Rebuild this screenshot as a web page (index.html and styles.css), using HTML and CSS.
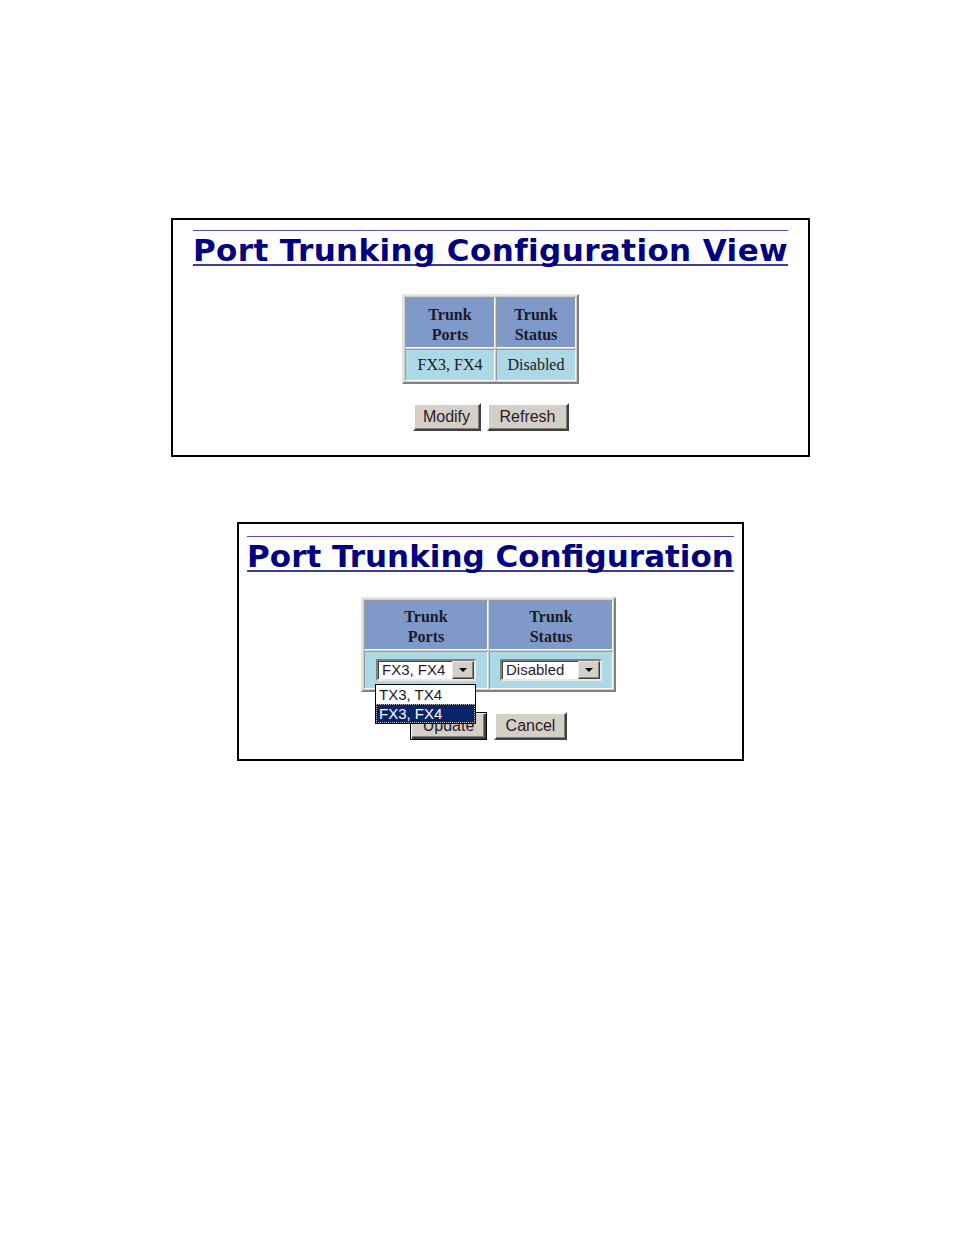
FILE: index.html
```html
<!DOCTYPE html>
<html>
<head>
<meta charset="utf-8">
<link rel="stylesheet" href="styles.css">
</head>
<body>
<div class="page">
  <div class="panel panel-view">
    <div class="title"><span class="title-text">Port Trunking Configuration View</span></div>
    <table class="grid grid-view">
      <tr><th>Trunk<br>Ports</th><th>Trunk<br>Status</th></tr>
      <tr><td>FX3, FX4</td><td>Disabled</td></tr>
    </table>
    <div class="buttons buttons-view">
      <button class="btn btn-modify">Modify</button>
      <button class="btn btn-refresh">Refresh</button>
    </div>
  </div>

  <div class="panel panel-edit">
    <div class="title"><span class="title-text">Port Trunking Configuration</span></div>
    <table class="grid grid-edit">
      <tr><th>Trunk<br>Ports</th><th>Trunk<br>Status</th></tr>
      <tr>
        <td>
          <div class="select-wrap">
            <div class="select select-ports"><span class="select-value">FX3, FX4</span><span class="select-arrow"></span></div>
            <div class="dropdown">
              <div class="option">TX3, TX4</div>
              <div class="option option-selected">FX3, FX4</div>
            </div>
          </div>
        </td>
        <td>
          <div class="select select-status"><span class="select-value">Disabled</span><span class="select-arrow"></span></div>
        </td>
      </tr>
    </table>
    <div class="buttons buttons-edit">
      <button class="btn btn-update btn-default">Update</button>
      <button class="btn btn-cancel">Cancel</button>
    </div>
  </div>
</div>
</body>
</html>
```

FILE: styles.css
```css
html, body {
  margin: 0;
  padding: 0;
  background: #ffffff;
}

.page {
  width: 954px;
  height: 1235px;
  padding-top: 218px;
  box-sizing: border-box;
}

.panel {
  border: 2px solid #000;
  box-sizing: border-box;
  display: flex;
  flex-direction: column;
  align-items: center;
}

.panel-view {
  margin-left: 171px;
  width: 639px;
  height: 239px;
}

.panel-edit {
  margin-left: 237px;
  margin-top: 65px;
  width: 507px;
  height: 239px;
}

.title {
  margin-top: 10px;
  line-height: 0;
}

.panel-edit .title {
  margin-top: 12px;
}

.title-text {
  display: inline-block;
  border-top: 1.5px solid #5050a8;
  font-family: "DejaVu Sans", Verdana, sans-serif;
  font-weight: bold;
  font-size: 31px;
  line-height: 38px;
  color: #000080;
  text-decoration: underline;
  text-decoration-thickness: 2px;
  text-underline-offset: 3px;
  text-decoration-skip-ink: none;
  text-decoration-color: #3a3aa0;
  white-space: nowrap;
}

.panel-view .title-text {
  letter-spacing: 0.4px;
}

.grid {
  border-collapse: separate;
  border-spacing: 1px;
  border: 2px solid;
  border-color: #e4e4e4 #808080 #808080 #e4e4e4;
  background: #d4d0c8;
  font-family: "Liberation Serif", "Times New Roman", serif;
  font-size: 16px;
  color: #000;
}

.grid th,
.grid td {
  border: 1px solid;
  border-color: #9a9a9a #ffffff #ffffff #9a9a9a;
  text-align: center;
  padding: 0;
}

.grid th {
  background: #7f99c8;
  font-weight: bold;
  line-height: 20px;
  color: #1a1a2a;
  padding-top: 4px;
}

.grid td {
  background: #add8e6;
  color: #1a1a1a;
}

.grid-view {
  margin-top: 25px;
}

.grid-view th {
  height: 45px;
}

.grid-view th:first-child { width: 88px; }
.grid-view th:last-child { width: 78px; }

.grid-view td {
  height: 30px;
}

.grid-edit {
  margin-top: 22px;
  margin-right: 4px;
}

.grid-edit th {
  height: 44px;
}

.grid-edit th:first-child { width: 122px; }
.grid-edit th:last-child { width: 122px; }

.grid-edit td {
  height: 36px;
}

.buttons {
  display: flex;
  gap: 6px;
}

.buttons-view {
  margin-top: 19px;
}

.buttons-edit {
  margin-top: 20px;
  margin-left: -4px;
  gap: 7px;
}

.btn {
  font-family: "Liberation Sans", Arial, sans-serif;
  font-size: 16px;
  color: #2a1a2a;
  background: #d4d0c8;
  height: 28px;
  padding: 0;
  border: 2px solid;
  border-color: #ffffff #404040 #404040 #ffffff;
  box-shadow: inset -1px -1px 0 #808080;
  margin: 0;
}

.btn-modify { width: 68px; }
.btn-refresh { width: 82px; }
.btn-update { width: 77px; }
.btn-cancel { width: 73px; }

.btn-default {
  border: 1px solid #000;
  box-shadow: inset 1px 1px 0 #ffffff, inset -2px -2px 0 #404040, inset -3px -3px 0 #808080;
}

.select-wrap {
  position: relative;
  display: inline-block;
  vertical-align: middle;
}

.select {
  display: inline-flex;
  align-items: center;
  justify-content: space-between;
  height: 22px;
  box-sizing: border-box;
  background: #fff;
  border: 2px solid;
  border-color: #808080 #e8e8e8 #e8e8e8 #808080;
  box-shadow: inset 1px 1px 0 #404040;
  vertical-align: middle;
  font-family: "Liberation Sans", Arial, sans-serif;
  font-size: 15px;
  color: #2a1a2a;
}

.select-ports { width: 100px; }
.select-status { width: 102px; }

.select-value {
  padding-left: 4px;
  line-height: 18px;
}

.select-arrow {
  position: relative;
  width: 22px;
  height: 18px;
  box-sizing: border-box;
  background: #d4d0c8;
  border: 1px solid;
  border-color: #e8e8e8 #404040 #404040 #e8e8e8;
  box-shadow: inset -1px -1px 0 #808080;
}

.select-arrow::after {
  content: "";
  position: absolute;
  left: 6px;
  top: 6px;
  border-left: 4px solid transparent;
  border-right: 4px solid transparent;
  border-top: 4px solid #000;
}

.dropdown {
  position: absolute;
  left: -1px;
  top: 25px;
  width: 101px;
  box-sizing: border-box;
  border: 1px solid #000;
  background: #fff;
  text-align: left;
  font-family: "Liberation Sans", Arial, sans-serif;
  font-size: 15px;
  z-index: 2;
}

.option {
  height: 19px;
  line-height: 19px;
  padding-left: 3px;
  color: #1a1a2a;
}

.option-selected {
  background: #0a246a;
  color: #fff;
  outline: 1px dotted #c0c0c0;
  outline-offset: -1px;
}
```
